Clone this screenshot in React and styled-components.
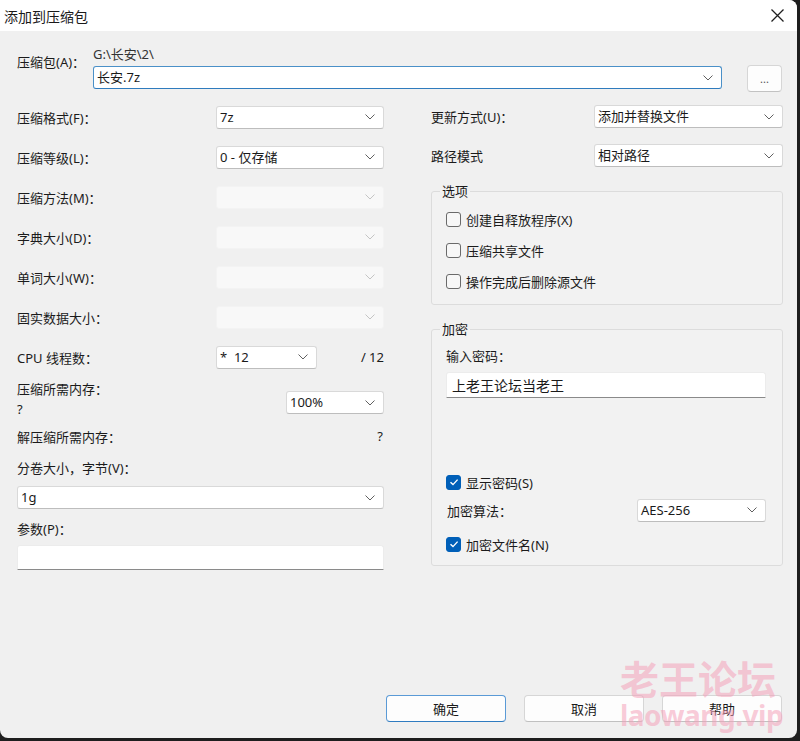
import styled, { createGlobalStyle } from "styled-components";

const GlobalStyle = createGlobalStyle`
  html, body {
    margin: 0;
    padding: 0;
    background: #1e1e1e;
  }
  body {
    font-family: "Noto Sans", "Noto Sans CJK SC", sans-serif;
    font-size: 13px;
    color: #1b1b1b;
  }
`;

const Chevron = ({ disabled }) => (
  <svg width="10" height="6" viewBox="0 0 10 6">
    <path d="M0.5 0.5 L5 5 L9.5 0.5" fill="none" stroke={disabled ? "#c4c4c4" : "#606060"} strokeWidth="1" />
  </svg>
);

const Combo = ({ value, w, disabled, focus }) => (
  <ComboBox $w={w} $disabled={disabled} $focus={focus}>
    <span>{value}</span>
    <Chevron disabled={disabled} />
  </ComboBox>
);

const Check = ({ checked, children }) => (
  <CheckRow>
    <CheckBox $checked={checked}>
      {checked && (
        <svg width="14" height="14" viewBox="0 0 14 14">
          <path d="M3.5 7.2 L6 9.6 L10.6 4.6" fill="none" stroke="#fff" strokeWidth="1.4" />
        </svg>
      )}
    </CheckBox>
    <span>{children}</span>
  </CheckRow>
);

const App = () => {
  return (
    <>
      <GlobalStyle />
      <Window>
        <TitleBar>
          <Title>添加到压缩包</Title>
          <CloseButton>
            <svg width="13" height="13" viewBox="0 0 13 13">
              <path d="M0.5 0.5 L12.5 12.5 M12.5 0.5 L0.5 12.5" stroke="#1f1f1f" strokeWidth="1.3" />
            </svg>
          </CloseButton>
        </TitleBar>

        <Body>
          <ArchiveRow>
            <ArchiveLabel>压缩包(A)：</ArchiveLabel>
            <PathText>G:\长安\2\</PathText>
            <Combo value="长安.7z" w={629} focus />
            <SmallButton>...</SmallButton>
          </ArchiveRow>

          <Columns>
            <LeftCol>
              <FormRow>
                <span>压缩格式(F)：</span>
                <Combo value="7z" w={168} />
              </FormRow>
              <FormRow>
                <span>压缩等级(L)：</span>
                <Combo value="0 - 仅存储" w={168} />
              </FormRow>
              <FormRow>
                <span>压缩方法(M)：</span>
                <Combo w={168} disabled />
              </FormRow>
              <FormRow>
                <span>字典大小(D)：</span>
                <Combo w={168} disabled />
              </FormRow>
              <FormRow>
                <span>单词大小(W)：</span>
                <Combo w={168} disabled />
              </FormRow>
              <FormRow>
                <span>固实数据大小：</span>
                <Combo w={168} disabled />
              </FormRow>
              <FormRow>
                <span>CPU 线程数：</span>
                <CpuGroup>
                  <Combo value="*  12" w={101} />
                  <span>/ 12</span>
                </CpuGroup>
              </FormRow>
              <MemRow>
                <MemLabel>
                  <span>压缩所需内存：</span>
                  <span>?</span>
                </MemLabel>
                <MemCombo>
                  <Combo value="100%" w={98} />
                </MemCombo>
              </MemRow>
              <UnpackRow>
                <span>解压缩所需内存：</span>
                <span>?</span>
              </UnpackRow>
              <BlockLabel $top={7}>分卷大小，字节(V)：</BlockLabel>
              <BlockField $top={8}>
                <Combo value="1g" w={367} />
              </BlockField>
              <BlockLabel $top={10}>参数(P)：</BlockLabel>
              <BlockField $top={6}>
                <TextInput $w={367} $h={25} />
              </BlockField>
            </LeftCol>

            <RightCol>
              <RightRow>
                <span>更新方式(U)：</span>
                <Combo value="添加并替换文件" w={189} />
              </RightRow>
              <RightRow>
                <span>路径模式</span>
                <Combo value="相对路径" w={189} />
              </RightRow>

              <Group $top={7} $h={123}>
                <legend>选项</legend>
                <CheckList>
                  <Check>创建自释放程序(X)</Check>
                  <Check>压缩共享文件</Check>
                  <Check>操作完成后删除源文件</Check>
                </CheckList>
              </Group>

              <Group $top={15} $h={246}>
                <legend>加密</legend>
                <CryptBody>
                  <div>输入密码：</div>
                  <TextInput $w={320} $h={26} $mt={7}>
                    上老王论坛当老王
                  </TextInput>
                  <Spacer />
                  <Check checked>显示密码(S)</Check>
                  <AlgoRow>
                    <span>加密算法：</span>
                    <Combo value="AES-256" w={129} />
                  </AlgoRow>
                  <Check checked>加密文件名(N)</Check>
                </CryptBody>
              </Group>
            </RightCol>
          </Columns>

          <ButtonBar>
            <DialogButton $primary>确定</DialogButton>
            <DialogButton>取消</DialogButton>
            <DialogButton>帮助</DialogButton>
          </ButtonBar>
        </Body>

        <Watermark>
          <div>老王论坛</div>
          <div className="site">laowang.vip</div>
        </Watermark>
      </Window>
    </>
  );
};

const Window = styled.div`
  position: relative;
  width: 797px;
  height: 738px;
  background: #f0f0f0;
  border-radius: 0 8px 8px 8px;
  overflow: hidden;
  display: flex;
  flex-direction: column;
`;

const TitleBar = styled.div`
  height: 31px;
  background: #ffffff;
  display: flex;
  align-items: center;
  justify-content: space-between;
  padding: 0 12px 0 4px;
`;

const Title = styled.div`
  font-size: 14px;
  font-family: "Noto Sans CJK SC", sans-serif;
  color: #1a1a1a;
`;

const CloseButton = styled.div`
  display: flex;
  align-items: center;
  padding-right: 1px;
`;

const Body = styled.div`
  flex: 1;
  display: flex;
  flex-direction: column;
  padding: 14px 15px 16px 17px;
`;

const ArchiveRow = styled.div`
  display: grid;
  grid-template-columns: 76px 629px 1fr;
  grid-template-rows: 20px 25px;
  align-items: center;

  & > :nth-child(3) {
    grid-column: 2;
    grid-row: 2;
  }
`;

const ArchiveLabel = styled.div`
  grid-column: 1;
  grid-row: 1 / 3;
  align-self: start;
  margin-top: 7px;
  white-space: nowrap;
`;

const PathText = styled.div`
  grid-column: 2;
  grid-row: 1;
  color: #333;
  margin-top: -4px;
`;

const SmallButton = styled.div`
  grid-column: 3;
  grid-row: 2;
  justify-self: end;
  box-sizing: border-box;
  width: 35px;
  height: 27px;
  margin-top: 1px;
  background: #fdfdfd;
  border: 1px solid #d6d6d6;
  border-bottom-color: #c2c2c2;
  border-radius: 4px;
  display: flex;
  align-items: center;
  justify-content: center;
  font-size: 11px;
  color: #555;
`;

const ComboBox = styled.div`
  box-sizing: border-box;
  width: ${(p) => p.$w}px;
  height: 23px;
  flex-shrink: 0;
  display: flex;
  align-items: center;
  justify-content: space-between;
  padding: 0 8px 0 3px;
  border-radius: 3px;
  background: ${(p) => (p.$disabled ? "#f8f8f8" : "#ffffff")};
  border: 1px solid ${(p) => (p.$focus ? "#4a90c8" : p.$disabled ? "#f3f3f3" : "#d9d9d9")};
  border-bottom-color: ${(p) => (p.$focus ? "#2f7bbd" : p.$disabled ? "#f3f3f3" : "#bdbdbd")};
  color: #1a1a1a;
  white-space: pre;

  span {
    line-height: 1;
  }
`;

const Columns = styled.div`
  display: flex;
  gap: 47px;
  margin-top: 7px;
`;

const LeftCol = styled.div`
  width: 367px;
  display: flex;
  flex-direction: column;
`;

const FormRow = styled.div`
  height: 40px;
  display: flex;
  align-items: center;
  justify-content: space-between;
`;

const CpuGroup = styled.div`
  width: 168px;
  display: flex;
  align-items: center;
  justify-content: space-between;
`;

const MemRow = styled.div`
  height: 44px;
  display: flex;
  justify-content: space-between;
`;

const MemLabel = styled.div`
  display: flex;
  flex-direction: column;
  line-height: 20px;
  margin-top: 2px;
`;

const MemCombo = styled.div`
  margin-top: 14px;
`;

const UnpackRow = styled.div`
  height: 30px;
  display: flex;
  align-items: center;
  justify-content: space-between;
  padding-right: 1px;
`;

const BlockLabel = styled.div`
  line-height: 20px;
  margin-top: ${(p) => p.$top}px;
`;

const BlockField = styled.div`
  margin-top: ${(p) => p.$top}px;
`;

const TextInput = styled.div`
  box-sizing: border-box;
  width: ${(p) => p.$w}px;
  height: ${(p) => p.$h}px;
  margin-top: ${(p) => p.$mt || 0}px;
  background: #ffffff;
  border: 1px solid #ececec;
  border-bottom: 1px solid #8a8a8a;
  border-radius: 3px 3px 0 0;
  padding: 0 5px;
  display: flex;
  align-items: center;
  font-size: 14px;
  font-family: "Noto Sans CJK SC", sans-serif;
  color: #1a1a1a;
`;

const RightCol = styled.div`
  width: 352px;
  display: flex;
  flex-direction: column;
`;

const RightRow = styled.div`
  height: 39px;
  display: flex;
  align-items: center;
  justify-content: space-between;
`;

const Group = styled.fieldset`
  box-sizing: border-box;
  margin: ${(p) => p.$top}px 0 0 0;
  height: ${(p) => p.$h}px;
  padding: 0 16px 0 14px;
  border: 1px solid #dcdcdc;
  border-radius: 3px;
  background: #f2f2f2;

  legend {
    padding: 0 2px;
    margin-left: -6px;
    line-height: 18px;
    color: #1a1a1a;
  }
`;

const CheckList = styled.div`
  display: flex;
  flex-direction: column;
  gap: 9px;
  margin-top: 8px;
`;

const CheckRow = styled.div`
  height: 22px;
  display: flex;
  align-items: center;
  gap: 5px;
`;

const CheckBox = styled.div`
  box-sizing: border-box;
  width: 15px;
  height: 15px;
  border-radius: 3px;
  border: 1px solid ${(p) => (p.$checked ? "#005fb8" : "#6a6a6a")};
  background: ${(p) => (p.$checked ? "#005fb8" : "#f7f7f7")};
  display: flex;
  align-items: center;
  justify-content: center;

  svg {
    margin: -1px;
  }
`;

const CryptBody = styled.div`
  display: flex;
  flex-direction: column;
  padding-top: 8px;
`;

const Spacer = styled.div`
  height: 73px;
`;

const AlgoRow = styled.div`
  height: 34px;
  margin-bottom: 6px;
  display: flex;
  align-items: center;
  justify-content: space-between;
  padding-left: 1px;
`;

const ButtonBar = styled.div`
  margin-top: auto;
  display: flex;
  justify-content: flex-end;
  gap: 18px;
`;

const DialogButton = styled.div`
  box-sizing: border-box;
  width: 120px;
  height: 27px;
  display: flex;
  align-items: center;
  justify-content: center;
  background: #fdfdfd;
  border-radius: 4px;
  border: 1px solid ${(p) => (p.$primary ? "#5a9ad6" : "#d6d6d6")};
  border-bottom-color: ${(p) => (p.$primary ? "#2f7bc0" : "#c0c0c0")};
  font-family: "Noto Sans CJK SC", sans-serif;
  color: #1a1a1a;
`;

const Watermark = styled.div`
  position: absolute;
  left: 620px;
  top: 654px;
  color: rgba(244, 160, 185, 0.55);
  font-family: "Noto Sans CJK SC", sans-serif;
  font-weight: 700;
  font-size: 39px;
  line-height: 46px;
  pointer-events: none;

  .site {
    font-family: "Noto Sans", sans-serif;
    font-size: 28px;
    line-height: 30px;
    letter-spacing: -0.5px;
  }
`;

export default App;
